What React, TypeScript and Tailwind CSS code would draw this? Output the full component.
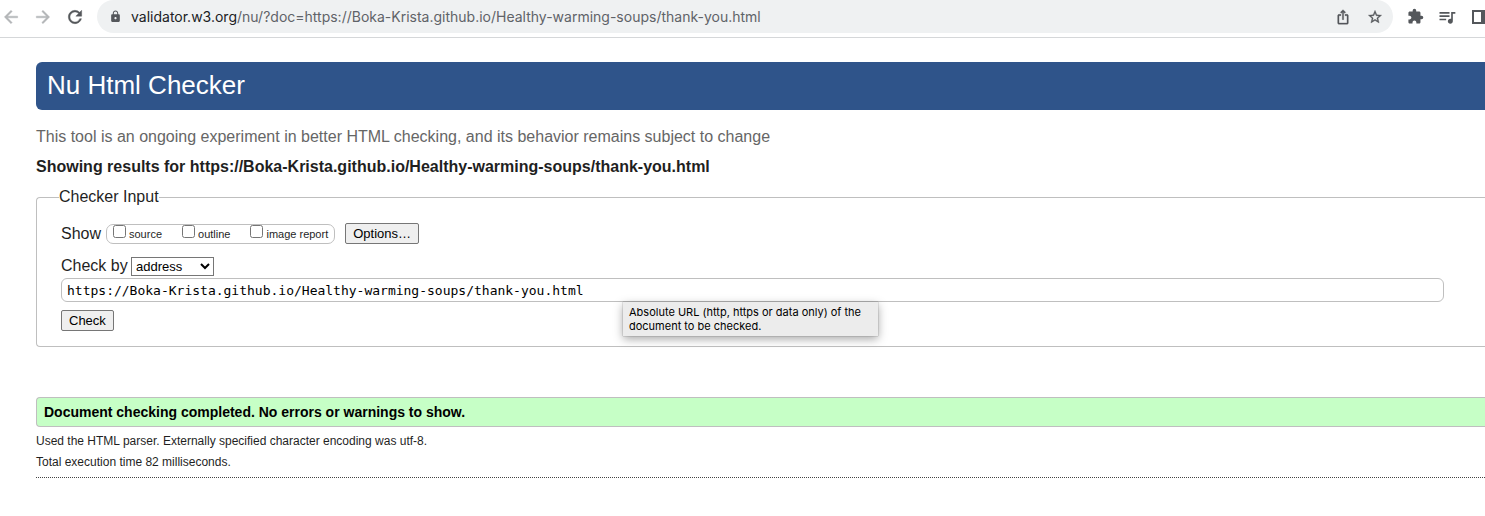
import { useState } from "react";
import { MdExtension, MdLock, MdQueueMusic } from "react-icons/md";

const ADDRESS = "https://Boka-Krista.github.io/Healthy-warming-soups/thank-you.html";
const REPORTS = ["source", "outline", "image report"];

const GLYPHS = {
  back: "M20 11H7.83l5.59-5.59L12 4l-8 8 8 8 1.41-1.41L7.83 13H20v-2z",
  forward: "M12 4l-1.41 1.41L16.17 11H4v2h12.17l-5.58 5.59L12 20l8-8z",
  reload:
    "M17.65 6.35A7.958 7.958 0 0 0 12 4c-4.42 0-7.99 3.58-7.99 8s3.57 8 7.99 8c3.73 0 6.84-2.55 7.73-6h-2.08A5.99 5.99 0 0 1 12 18c-3.31 0-6-2.69-6-6s2.69-6 6-6c1.66 0 3.14.69 4.22 1.78L13 11h7V4l-2.35 2.35z",
  share:
    "M16 5l-1.42 1.42-1.59-1.59V16h-1.98V4.83L9.42 6.42 8 5l4-4 4 4zm4 5v11c0 1.1-.9 2-2 2H6c-1.11 0-2-.9-2-2V10c0-1.11.89-2 2-2h3v2H6v11h12V10h-3V8h3c1.1 0 2 .89 2 2z",
  star:
    "M22 9.24l-7.19-.62L12 2 9.19 8.63 2 9.24l5.46 4.73L5.82 21 12 17.27 18.18 21l-1.63-7.03L22 9.24zM12 15.4l-3.76 2.27 1-4.28-3.32-2.88 4.38-.38L12 6.1l1.71 4.04 4.38.38-3.32 2.88 1 4.28L12 15.4z",
};

function Glyph({ name, className }: { name: keyof typeof GLYPHS; className: string }) {
  return (
    <svg viewBox="0 0 24 24" className={className} fill="currentColor" stroke="currentColor" strokeWidth="0.5" aria-hidden="true">
      <path d={GLYPHS[name]} />
    </svg>
  );
}

function BrowserBar() {
  return (
    <header className="flex items-start gap-3 overflow-hidden border-b border-[#d5d7d9] pb-1 pl-px">
      <nav className="flex h-[33px] items-center gap-3 text-[#b4b6b8]">
        <button aria-label="Back"><Glyph name="back" className="size-5" /></button>
        <button aria-label="Forward"><Glyph name="forward" className="size-5" /></button>
        <button aria-label="Reload" className="text-[#54575b]"><Glyph name="reload" className="size-5" /></button>
      </nav>
      <div className="flex h-[33px] min-w-0 flex-1 items-center rounded-full bg-[#eff1f2] pr-[10px] pl-3 text-[#54575b]">
        <MdLock size={13} className="shrink-0" />
        <div
          role="textbox"
          aria-label="Address bar"
          contentEditable
          suppressContentEditableWarning
          className="ml-[9px] min-w-0 flex-1 truncate font-['Inter',sans-serif] text-[14px] leading-[20px] text-[#5f6368]"
        >
          <span className="text-[#202124]">validator.w3.org</span>/nu/?doc={ADDRESS}
        </div>
        <div className="flex items-center gap-4">
          <button aria-label="Share"><Glyph name="share" className="size-4" /></button>
          <button aria-label="Bookmark"><Glyph name="star" className="size-4" /></button>
        </div>
      </div>
      <div className="-mr-1 flex h-[33px] items-center gap-3 text-[#54575b]">
        <button aria-label="Extensions" className="flex w-5 justify-center"><MdExtension size={17} /></button>
        <button aria-label="Media controls"><MdQueueMusic size={20} /></button>
        <button aria-label="Side panel" className="flex w-5 justify-center">
          <svg width="14" height="14" viewBox="0 0 14 14" fill="none">
            <rect x="1" y="1" width="12" height="12" stroke="currentColor" strokeWidth="2" />
            <rect x="9" y="1" width="4" height="12" fill="currentColor" />
          </svg>
        </button>
      </div>
    </header>
  );
}

function CheckerForm() {
  const [address, setAddress] = useState(ADDRESS);
  const buttonStyle = "h-[21px] rounded-[2px] border border-[#767676] bg-[#efefef] px-[7px] text-[13px] leading-none text-black";
  return (
    <form onSubmit={(e) => e.preventDefault()}>
      <fieldset className="rounded-l-[4px] border border-r-0 border-[#bfbfbf] pr-[41px] pb-[15px] pl-6">
        <legend className="-ml-[2px] text-[16px] leading-[20px]">Checker Input</legend>
        <div className="mt-4 flex items-center">
          <span className="w-[45px] leading-[20px]">Show</span>
          <div className="flex h-[20px] items-center gap-5 rounded-[7px] border border-[#bfbfbf] px-1.5">
            {REPORTS.map((name) => (
              <label key={name} className="flex items-center gap-[3px] text-[11px] leading-[18px]">
                <input type="checkbox" className="mb-1 size-[13px]" />
                {name}
              </label>
            ))}
          </div>
          <button type="button" className={`${buttonStyle} ml-[10px]`}>Options…</button>
        </div>
        <div className="mt-3 flex items-center">
          <label htmlFor="method" className="w-[70px] leading-[20px]">Check by</label>
          <div className="relative">
            <select
              id="method"
              className="block h-[19px] w-[83px] appearance-none border border-[#767676] bg-white pl-1 text-[13px] leading-none text-black"
            >
              <option>address</option>
              <option>file upload</option>
              <option>text input</option>
            </select>
            <svg className="pointer-events-none absolute top-[6px] right-1" width="10" height="7" viewBox="0 0 10 7" fill="none">
              <path d="M1 1l4 4 4-4" stroke="black" strokeWidth="2" />
            </svg>
          </div>
        </div>
        <div className="relative mt-0.5">
          <input
            type="text"
            aria-label="Address"
            value={address}
            onChange={(e) => setAddress(e.target.value)}
            className="block h-6 w-full rounded-[6px] border border-[#bfbfbf] px-[5px] font-['DejaVu_Sans_Mono',monospace] text-[13px] text-black"
          />
          <div
            role="tooltip"
            className="absolute top-6 left-[562px] w-[255px] bg-[#ececec] px-1.5 py-[3px] font-['Inter',sans-serif] text-[11px] leading-[14px] text-black shadow-[0_3px_9px_rgba(0,0,0,0.35),0_0_1px_rgba(0,0,0,0.5)]"
          >
            Absolute URL (http, https or data only) of the document to be checked.
          </div>
        </div>
        <button type="submit" className={`${buttonStyle} mt-2 block`}>Check</button>
      </fieldset>
    </form>
  );
}

export default function App() {
  return (
    <div className="min-h-screen bg-white font-['Liberation_Sans',Arial,sans-serif] text-[16px] text-[#1f1f1f]">
      <BrowserBar />
      <main className="pt-6 pl-9">
        <h1 className="rounded-l-[6px] bg-[#2f548a] px-[11px] pt-[3px] pb-[5px] text-[26px] leading-[40px] text-white">Nu Html Checker</h1>
        <p className="mt-[17px] leading-[20px] text-[#666]">
          This tool is an ongoing experiment in better HTML checking, and its behavior remains subject to change
        </p>
        <h2 className="mt-[10px] mb-[10px] font-bold leading-[20px]">Showing results for {ADDRESS}</h2>
        <CheckerForm />
        <section className="mt-[50px] border-b border-dotted border-[#444] pb-1">
          <p className="rounded-l-[4px] border border-r-0 border-[#bfbfbf] bg-[#c6ffc6] px-[7px] text-[14px] leading-[28px] font-bold text-black">
            Document checking completed. No errors or warnings to show.
          </p>
          <p className="mt-1 text-[12px] leading-[21px]">Used the HTML parser. Externally specified character encoding was utf-8.</p>
          <p className="text-[12px] leading-[21px]">Total execution time 82 milliseconds.</p>
        </section>
      </main>
    </div>
  );
}
